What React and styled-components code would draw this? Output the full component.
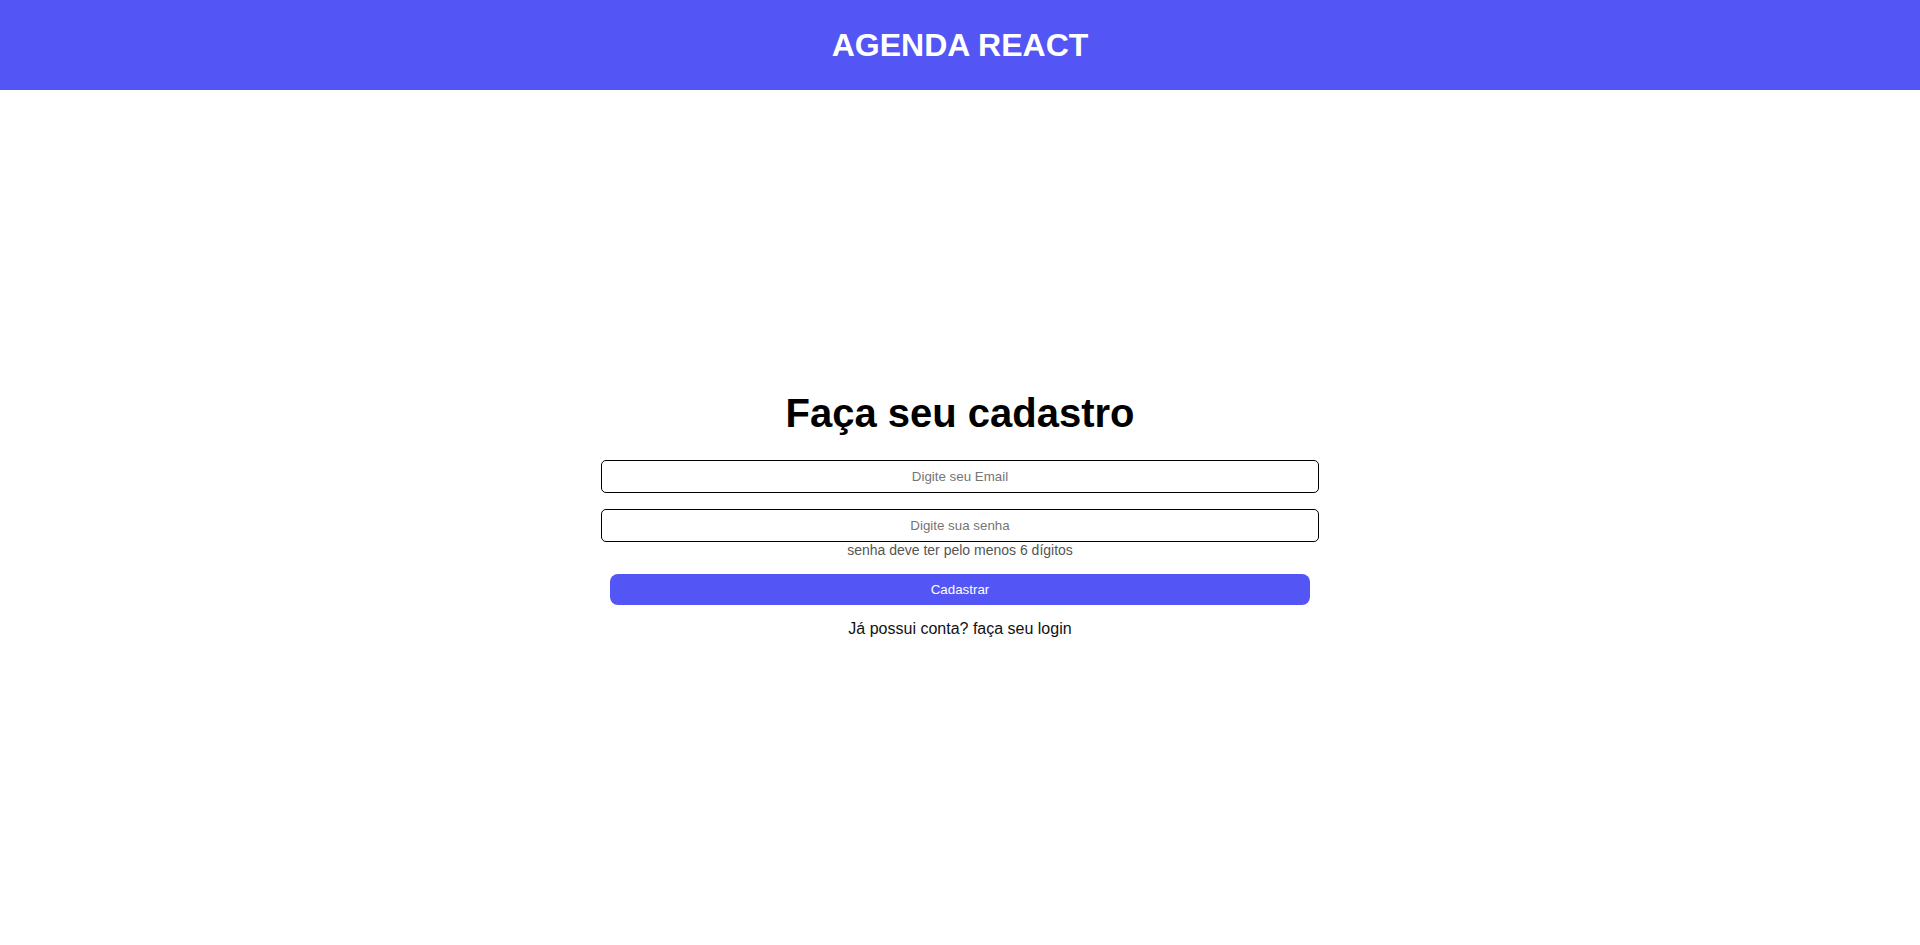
import React from "react";
import styled, { createGlobalStyle } from "styled-components";

const GlobalStyle = createGlobalStyle`
  * { box-sizing: border-box; }
  html, body { margin: 0; padding: 0; background: #ffffff; }
  body { font-family: "Liberation Sans", Arial, sans-serif; color: #000; }
`;

const Header = styled.header`
  height: 90px;
  background: #5356f4;
  display: flex;
  align-items: center;
  justify-content: center;
`;

const Brand = styled.h1`
  margin: 0;
  color: #ffffff;
  font-size: 32px;
  font-weight: 700;
`;

const Main = styled.main`
  min-height: calc(100vh - 90px);
  padding-bottom: 8px;
  display: flex;
  align-items: center;
  justify-content: center;
`;

const Form = styled.form`
  width: 718px;
  display: flex;
  flex-direction: column;
  align-items: center;
`;

const Title = styled.h2`
  margin: 0 0 24px;
  font-size: 40px;
  font-weight: 700;
  line-height: 46px;
`;

const Field = styled.div`
  width: 100%;
  display: flex;
  flex-direction: column;
  align-items: center;
  margin-bottom: ${(p) => p.$gap}px;
`;

const Input = styled.input`
  width: 100%;
  height: 33px;
  border: 1px solid #000;
  border-radius: 5px;
  background: #fff;
  text-align: center;
  font-family: "Liberation Sans", Arial, sans-serif;
  font-size: 13.33px;
  color: #000;
  outline: none;
  &::placeholder { color: #757575; }
`;

const Hint = styled.span`
  font-size: 14px;
  line-height: 16px;
  color: #555555;
`;

const Button = styled.button`
  width: 700px;
  height: 31px;
  border: none;
  border-radius: 8px;
  background: #5356f4;
  color: #ffffff;
  font-family: "Liberation Sans", Arial, sans-serif;
  font-size: 13.33px;
  cursor: pointer;
  margin-bottom: 15px;
`;

const LoginText = styled.p`
  margin: 0;
  font-size: 16px;
  line-height: 18px;
  color: #111;
`;

export default function App() {
  return (
    <>
      <GlobalStyle />
      <Header>
        <Brand>AGENDA REACT</Brand>
      </Header>
      <Main>
        <Form onSubmit={(e) => e.preventDefault()}>
          <Title>Faça seu cadastro</Title>
          <Field $gap={16}>
            <Input type="email" placeholder="Digite seu Email" />
          </Field>
          <Field $gap={16}>
            <Input type="password" placeholder="Digite sua senha" />
            <Hint>senha deve ter pelo menos 6 dígitos</Hint>
          </Field>
          <Button type="submit">Cadastrar</Button>
          <LoginText>Já possui conta? faça seu login</LoginText>
        </Form>
      </Main>
    </>
  );
}
